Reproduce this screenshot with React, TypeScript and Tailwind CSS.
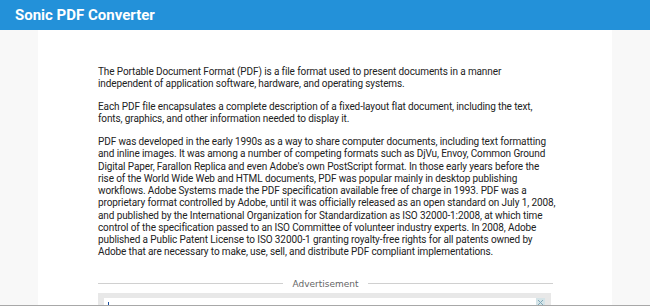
import React from "react";

const p1 = [
  "The Portable Document Format (PDF) is a file format used to present documents in a manner",
  "independent of application software, hardware, and operating systems.",
];
const p2 = [
  "Each PDF file encapsulates a complete description of a fixed-layout flat document, including the text,",
  "fonts, graphics, and other information needed to display it.",
];
const p3 = [
  "PDF was developed in the early 1990s as a way to share computer documents, including text formatting",
  "and inline images. It was among a number of competing formats such as DjVu, Envoy, Common Ground",
  "Digital Paper, Farallon Replica and even Adobe's own PostScript format. In those early years before the",
  "rise of the World Wide Web and HTML documents, PDF was popular mainly in desktop publishing",
  "workflows. Adobe Systems made the PDF specification available free of charge in 1993. PDF was a",
  "proprietary format controlled by Adobe, until it was officially released as an open standard on July 1, 2008,",
  "and published by the International Organization for Standardization as ISO 32000-1:2008, at which time",
  "control of the specification passed to an ISO Committee of volunteer industry experts. In 2008, Adobe",
  "published a Public Patent License to ISO 32000-1 granting royalty-free rights for all patents owned by",
  "Adobe that are necessary to make, use, sell, and distribute PDF compliant implementations.",
];

function Para({ lines, className }: { lines: string[]; className?: string }) {
  return (
    <p className={className}>
      {lines.map((l, i) => (
        <span key={i} className="block whitespace-nowrap">
          {l}
        </span>
      ))}
    </p>
  );
}

export default function App() {
  return (
    <div className="min-h-[306px] bg-[#f8f8f8] font-['Roboto',sans-serif]">
      <header className="h-[30px] bg-[#2391d9] flex items-center px-[15px]">
        <h1 className="text-white font-bold text-[15px] leading-none">Sonic PDF Converter</h1>
      </header>
      <div className="mx-[38px] bg-white pt-[36px] px-[60px] pb-[20px]">
        <div className="w-[455px] text-[10px] leading-[12.25px] tracking-[-0.11px] text-[#222]">
          <Para lines={p1} className="mb-[10.5px]" />
          <Para lines={p2} className="mb-[10.5px]" />
          <Para lines={p3} />
        </div>
        <div className="w-[455px] mt-[20px] flex items-center gap-[9px]">
          <div className="flex-1 h-px bg-[#d0d0d0]" />
          <span className="text-[9px] leading-[10px] text-[#666] font-['DejaVu_Sans',sans-serif]">Advertisement</span>
          <div className="flex-1 h-px bg-[#d0d0d0]" />
        </div>
        <div className="w-[453px] mt-[4px] bg-[#e8e8e8] pt-[5px] px-[6px] h-[40px]">
          <div className="bg-white h-full relative">
            <div className="absolute left-[4px] top-[4px] w-px h-[10px] bg-[#1a4fa0]" />
            <div className="absolute right-[0px] top-0 w-[9px] h-[9px] bg-[#d5e4e8] flex items-center justify-center">
              <svg width="7" height="7" viewBox="0 0 7 7">
                <path d="M1 1L6 6M6 1L1 6" stroke="#7fa8b8" strokeWidth="1" />
              </svg>
            </div>
          </div>
        </div>
      </div>
      <div className="fixed left-0 right-0 bottom-0 h-[1px] bg-[#a8a8a8]" />
    </div>
  );
}
